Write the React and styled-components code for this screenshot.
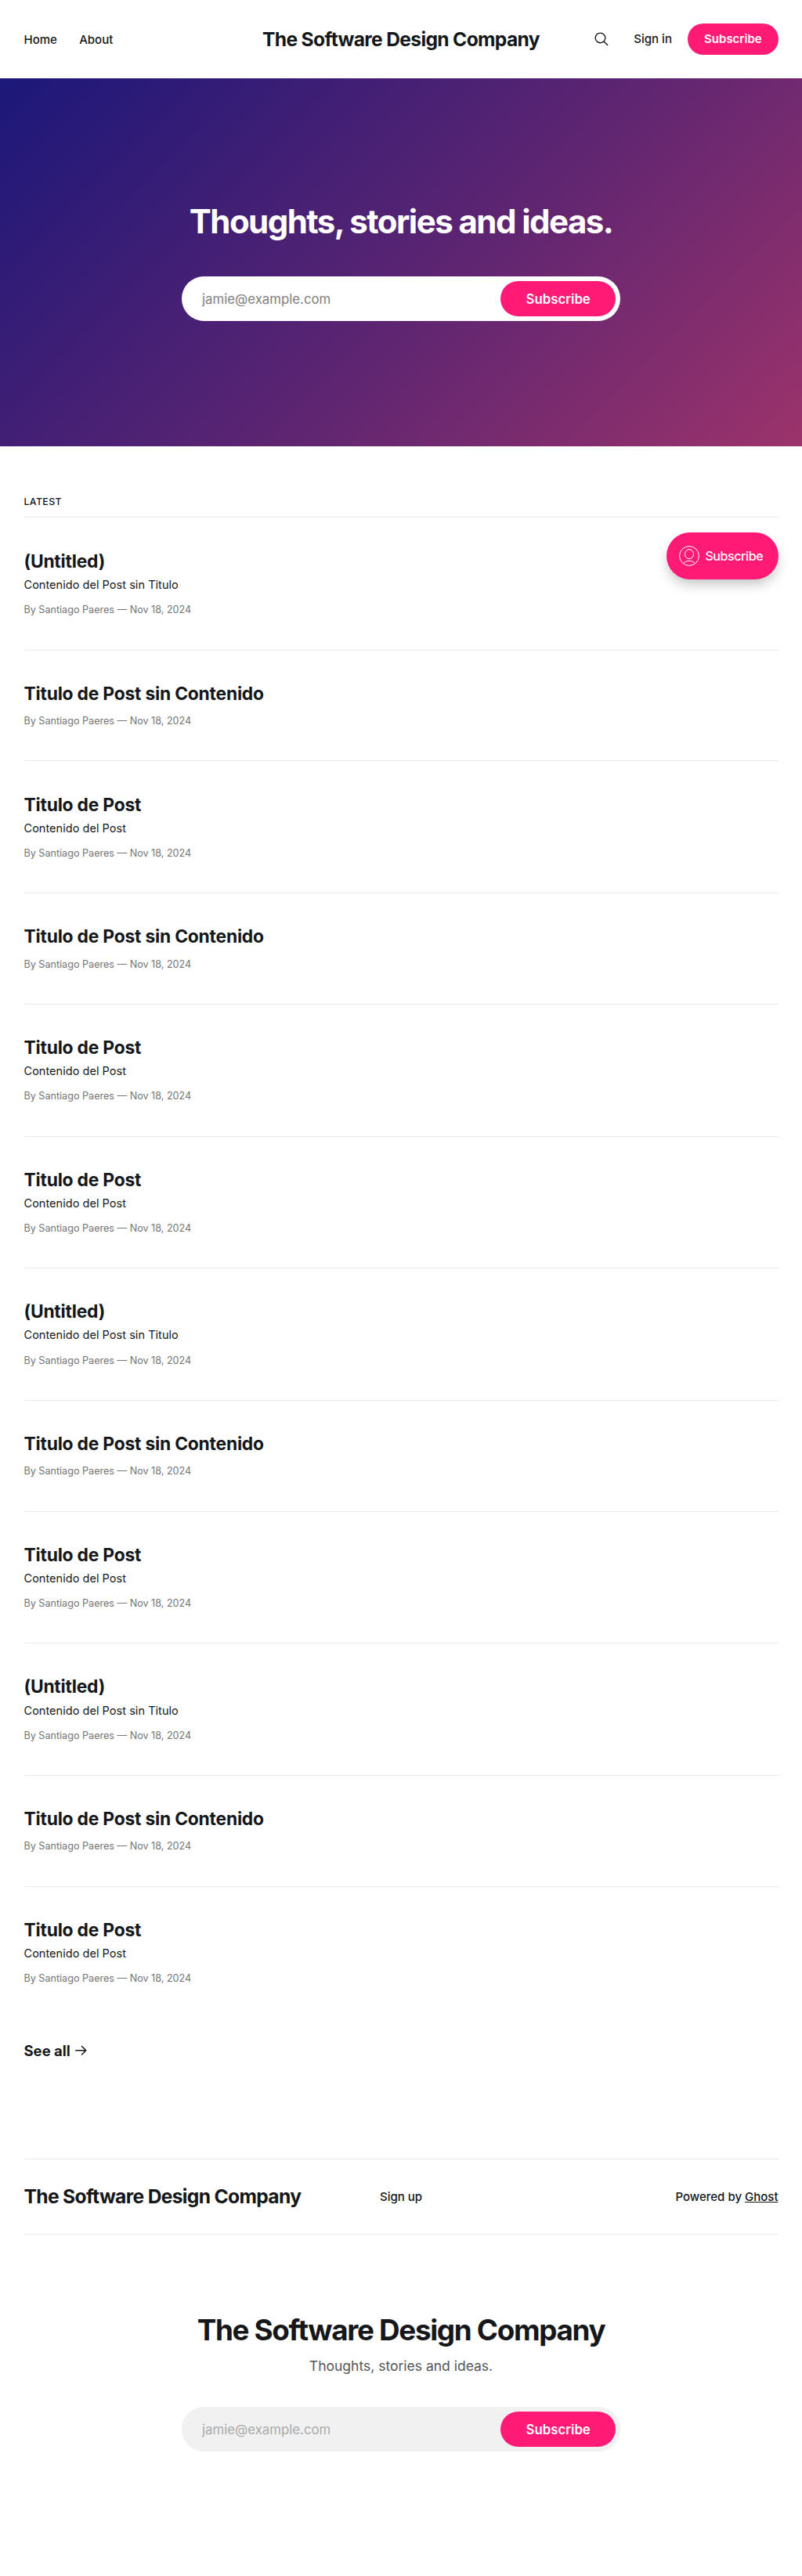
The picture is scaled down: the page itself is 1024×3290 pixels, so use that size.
import React from "react";
import styled, { createGlobalStyle } from "styled-components";

const ink = "#15171a";
const accent = "#ff1a75";
const line = "#e9e9ea";

const GlobalStyle = createGlobalStyle`
  *, *::before, *::after { box-sizing: border-box; }
  html { background: #fff; }
  body {
    margin: 0;
    color: ${ink};
    font-family: Inter, "Liberation Sans", sans-serif;
    -webkit-font-smoothing: antialiased;
  }
  h1, h2, h3, p { margin: 0; }
  a { color: inherit; text-decoration: none; }
`;

const Page = styled.div`
  position: relative;
  height: 3290px;
  overflow: hidden;
  background: #fff;
`;

const Header = styled.header`
  display: grid;
  grid-template-columns: 1fr auto 1fr;
  align-items: center;
  height: 100px;
  padding: 0 30.5px;
`;

const Nav = styled.nav`
  display: flex;
  gap: 28.3px;
  font-size: 15px;
  font-weight: 500;
`;

const Logo = styled.a`
  font-size: 24.6px;
  font-weight: 700;
  letter-spacing: -0.66px;
  line-height: 1.1;
  white-space: nowrap;
`;

const HeaderLogo = styled(Logo)`
  padding-top: 1.5px;
`;

const Actions = styled.div`
  display: flex;
  align-items: center;
  justify-content: flex-end;
  font-size: 15px;
  font-weight: 500;
`;

const SearchButton = styled.button`
  display: flex;
  margin: 0 32.2px 0 0;
  padding: 0;
  border: 0;
  background: none;
  color: ${ink};
`;

const HeaderButton = styled.a`
  display: flex;
  align-items: center;
  justify-content: center;
  width: 115.3px;
  height: 39.4px;
  margin-left: 20.3px;
  border-radius: 40px;
  background: ${accent};
  color: #fff;
  font-weight: 600;
`;

const Hero = styled.section`
  display: flex;
  flex-direction: column;
  align-items: center;
  height: 469.5px;
  padding-top: 155.8px;
  background: linear-gradient(135deg, #1b1a7a 0%, #1e1879 2%, #5a2472 52%, #9c336b 100%);
  color: #fff;
`;

const HeroTitle = styled.h1`
  font-size: 42px;
  font-weight: 700;
  line-height: 54px;
  letter-spacing: -1.55px;
`;

const SignupForm = styled.form`
  display: flex;
  align-items: center;
  width: 560px;
  height: 56.3px;
  margin-top: ${(p) => p.$gap};
  padding: 6px 6px 6px 26px;
  border: 0;
  border-radius: 40px;
  background: ${(p) => p.$background};
`;

const EmailInput = styled.input`
  flex: 1;
  min-width: 0;
  height: 24px;
  padding: 0;
  border: 0;
  outline: 0;
  background: transparent;
  font: 400 16.8px/24px Inter, sans-serif;
  &::placeholder { color: ${(p) => p.$hint}; opacity: 1; }
`;

const FormButton = styled.button`
  width: 146.7px;
  height: 44.3px;
  padding: 0;
  border: 0;
  border-radius: 40px;
  background: ${accent};
  color: #fff;
  font: 600 16.8px/24px Inter, sans-serif;
`;

const Main = styled.main`
  padding: 64px 30.5px 0;
`;

const SectionTitle = styled.h2`
  height: 27.5px;
  border-bottom: 1px solid ${line};
  font-size: 12.3px;
  font-weight: 500;
  line-height: 14px;
  letter-spacing: 0.4px;
  text-transform: uppercase;
`;

const Post = styled.article`
  height: ${(p) => (p.$tall ? "168.6px" : "141.9px")};
  padding-top: 41.8px;
  & + & {
    padding-top: 41.1px;
    border-top: 1px solid ${line};
  }
`;

const PostTitle = styled.h3`
  font-size: 22.8px;
  font-weight: 700;
  line-height: 28px;
  letter-spacing: -0.2px;
`;

const Excerpt = styled.p`
  margin-top: 6.2px;
  font-size: 14.5px;
  line-height: 20px;
  letter-spacing: 0.04px;
`;

const Meta = styled.p`
  margin-top: 13.2px;
  color: #737476;
  font-size: 12.6px;
  line-height: 17px;
  ${PostTitle} + & { margin-top: 12.4px; }
`;

const SeeAll = styled.a`
  display: flex;
  align-items: center;
  gap: 5px;
  margin-top: 29.6px;
  font-size: 18.5px;
  font-weight: 700;
  line-height: 24px;
`;

const Footer = styled.footer`
  margin-top: 126.3px;
  padding: 0 30.5px;
`;

const FooterBar = styled.div`
  display: grid;
  grid-template-columns: 1fr auto 1fr;
  align-items: center;
  height: 96.4px;
  border-top: 1px solid ${line};
  border-bottom: 1px solid ${line};
  font-size: 15px;
  font-weight: 500;
`;

const Powered = styled.span`
  text-align: right;
  a { text-decoration: underline; }
`;

const Signup = styled.section`
  display: flex;
  flex-direction: column;
  align-items: center;
  padding-top: 98.7px;
`;

const SignupTitle = styled.h2`
  font-size: 36.8px;
  font-weight: 700;
  line-height: 48px;
  letter-spacing: -1.31px;
`;

const SignupText = styled.p`
  margin-top: 9.6px;
  color: #55575a;
  font-size: 17.5px;
  line-height: 24px;
`;

const Portal = styled.a`
  position: absolute;
  top: 680px;
  right: 30px;
  display: flex;
  align-items: center;
  gap: 7.4px;
  width: 143px;
  height: 60px;
  padding-left: 16px;
  border-radius: 30px;
  background: ${accent};
  box-shadow: 0 8px 16px -2px rgba(0, 0, 0, 0.24);
  color: #fff;
  font-size: 16px;
  font-weight: 500;
  letter-spacing: -0.4px;
`;

const SearchIcon = () => (
  <svg width="18" height="18" viewBox="0 0 18 18" fill="none" stroke="currentColor" strokeWidth="1.4" strokeLinecap="round">
    <circle cx="7.5" cy="7.4" r="6.3" />
    <path d="M12 11.9 16.7 16.6" />
  </svg>
);

const ArrowIcon = () => (
  <svg width="16" height="14" viewBox="0 0 16 14" fill="none" stroke="currentColor" strokeWidth="1.5" strokeLinecap="round" strokeLinejoin="round">
    <path d="M1.8 6.7H14.8M9.5 1.5 14.8 6.7 9.5 12" />
  </svg>
);

const UserIcon = () => (
  <svg width="26" height="26" viewBox="0 0 26 26" fill="none" stroke="currentColor" strokeWidth="1">
    <circle cx="13" cy="13" r="12.4" />
    <ellipse cx="13" cy="10.7" rx="5.5" ry="6" />
    <path d="M5.3 22.7C7 20.6 9.8 19.4 13 19.4s6 1.2 7.7 3.3" />
  </svg>
);

const untitled = { title: "(Untitled)", excerpt: "Contenido del Post sin Titulo" };
const bare = { title: "Titulo de Post sin Contenido" };
const full = { title: "Titulo de Post", excerpt: "Contenido del Post" };
const posts = [untitled, bare, full, bare, full, full, untitled, bare, full, untitled, bare, full];

const EmailForm = ({ gap, background, hint }) => (
  <SignupForm $gap={gap} $background={background} onSubmit={(e) => e.preventDefault()}>
    <EmailInput type="email" placeholder="jamie@example.com" $hint={hint} />
    <FormButton type="submit">Subscribe</FormButton>
  </SignupForm>
);

export default function App() {
  return (
    <Page>
      <GlobalStyle />
      <Header>
        <Nav>
          <a href="#home">Home</a>
          <a href="#about">About</a>
        </Nav>
        <HeaderLogo href="#home">The Software Design Company</HeaderLogo>
        <Actions>
          <SearchButton aria-label="Search"><SearchIcon /></SearchButton>
          <a href="#signin">Sign in</a>
          <HeaderButton href="#subscribe">Subscribe</HeaderButton>
        </Actions>
      </Header>
      <Hero>
        <HeroTitle>Thoughts, stories and ideas.</HeroTitle>
        <EmailForm gap="43.7px" background="#fff" hint="#808080" />
      </Hero>
      <Main>
        <SectionTitle>Latest</SectionTitle>
        {posts.map((post, i) => (
          <Post key={i} $tall={Boolean(post.excerpt)}>
            <PostTitle>{post.title}</PostTitle>
            {post.excerpt && <Excerpt>{post.excerpt}</Excerpt>}
            <Meta>By Santiago Paeres — Nov 18, 2024</Meta>
          </Post>
        ))}
        <SeeAll href="#all">See all <ArrowIcon /></SeeAll>
      </Main>
      <Footer>
        <FooterBar>
          <Logo href="#home">The Software Design Company</Logo>
          <a href="#signup">Sign up</a>
          <Powered>Powered by <a href="#ghost">Ghost</a></Powered>
        </FooterBar>
        <Signup>
          <SignupTitle>The Software Design Company</SignupTitle>
          <SignupText>Thoughts, stories and ideas.</SignupText>
          <EmailForm gap="40.5px" background="#f1f1f1" hint="#a9a9a9" />
        </Signup>
      </Footer>
      <Portal href="#subscribe"><UserIcon />Subscribe</Portal>
    </Page>
  );
}
